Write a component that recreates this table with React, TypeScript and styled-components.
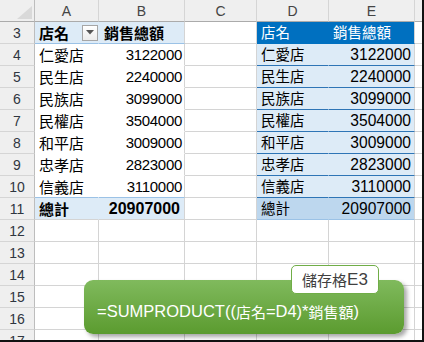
import React from 'react';
import styled, { createGlobalStyle } from 'styled-components';

const GlobalStyle = createGlobalStyle`
  html, body {
    margin: 0;
    padding: 0;
    background: #ffffff;
  }
  body {
    font-family: "Liberation Sans", "Noto Sans CJK TC", sans-serif;
  }
`;

const CJK = '"Noto Sans CJK TC", "Liberation Sans", sans-serif';
const NUM = '"Liberation Sans", "Noto Sans CJK TC", sans-serif';

const Frame = styled.div`
  position: relative;
  width: 424px;
  height: 342px;
  box-sizing: border-box;
  border-right: 2px solid #111;
  border-bottom: 2px solid #111;
  overflow: hidden;
  background: #fff;
`;

const Sheet = styled.div`
  display: grid;
  grid-template-columns: 35px 64px 86px 72px 72px 86px 1fr;
  grid-auto-rows: 22px;
`;

const Cell = styled.div<{ $align?: 'left' | 'right' | 'between' }>`
  box-sizing: border-box;
  display: flex;
  align-items: center;
  justify-content: ${(p) =>
    p.$align === 'right' ? 'flex-end' : p.$align === 'between' ? 'space-between' : 'flex-start'};
  padding: 0 3px 0 4px;
  border-right: 1px solid #d4d4d4;
  border-bottom: 1px solid #d4d4d4;
  white-space: nowrap;
  overflow: hidden;
  color: #000;
  font-size: 15px;
`;

const Corner = styled.div`
  box-sizing: border-box;
  background: #efefef;
  border-right: 1px solid #bdbdbd;
  border-bottom: 1px solid #ababab;
  display: flex;
  align-items: flex-end;
  justify-content: flex-end;
  padding: 0 2px 2px 0;
`;

const ColHead = styled.div`
  box-sizing: border-box;
  background: #efefef;
  border-right: 1px solid #d5d5d5;
  border-bottom: 1px solid #ababab;
  display: flex;
  align-items: center;
  justify-content: center;
  color: #444;
  font-family: ${NUM};
  font-size: 14px;
  overflow: hidden;
`;

const RowHead = styled.div`
  box-sizing: border-box;
  background: #efefef;
  border-right: 1px solid #bdbdbd;
  border-bottom: 1px solid #d5d5d5;
  display: flex;
  align-items: center;
  justify-content: center;
  color: #2f3640;
  font-family: ${NUM};
  font-size: 14px;
`;

type PivotTone = 'head' | 'body' | 'last' | 'total';

const PivotCell = styled(Cell)<{ $tone: PivotTone; $inner?: boolean }>`
  background: ${(p) => (p.$tone === 'head' || p.$tone === 'total' ? '#ddebf7' : '#ffffff')};
  border-right-color: ${(p) =>
    p.$inner ? (p.$tone === 'head' || p.$tone === 'total' ? '#ddebf7' : '#ffffff') : '#d4d4d4'};
  border-bottom-color: ${(p) =>
    p.$tone === 'head' || p.$tone === 'last' ? '#9bc2e6' : p.$tone === 'body' ? '#ffffff' : '#d4d4d4'};
  font-weight: ${(p) => (p.$tone === 'head' || p.$tone === 'total' ? 700 : 400)};
`;

type TableTone = 'head' | 'body' | 'total';

const TableCell = styled(Cell)<{ $tone: TableTone; $inner?: boolean }>`
  background: ${(p) => (p.$tone === 'head' ? '#0070c0' : p.$tone === 'total' ? '#bdd7ee' : '#ddebf7')};
  color: ${(p) => (p.$tone === 'head' ? '#ffffff' : '#000000')};
  border-right-color: ${(p) =>
    p.$inner ? (p.$tone === 'head' ? '#0070c0' : p.$tone === 'total' ? '#bdd7ee' : '#ddebf7') : '#d4d4d4'};
  border-bottom-color: ${(p) => (p.$tone === 'head' ? '#0070c0' : p.$tone === 'total' ? '#9bc2e6' : '#2e75b6')};
  font-size: 14px;
`;

const Han = styled.span<{ $size?: number }>`
  font-family: ${CJK};
  font-size: ${(p) => p.$size ?? 15}px;
  line-height: 1;
`;

const Num = styled.span<{ $size?: number; $bold?: boolean; $tight?: boolean }>`
  font-family: ${NUM};
  font-size: ${(p) => p.$size ?? 15}px;
  font-weight: ${(p) => (p.$bold ? 700 : 400)};
  letter-spacing: ${(p) => (p.$tight ? '-0.3px' : '0')};
  line-height: 1;
`;

const FilterButton = styled.span`
  box-sizing: border-box;
  width: 16px;
  height: 16px;
  border: 1px solid #a6a6a6;
  background: linear-gradient(#ffffff, #ececec);
  display: flex;
  align-items: center;
  justify-content: center;
  margin-right: -3px;
`;

const Callout = styled.div`
  position: absolute;
  left: 84px;
  top: 280px;
  width: 320px;
  height: 54px;
  box-sizing: border-box;
  border-radius: 9px;
  background: linear-gradient(#80ba5d, #5b9b2f);
  box-shadow: 3px 3px 4px rgba(0, 0, 0, 0.35);
  display: flex;
  align-items: center;
  padding: 9px 0 0 13px;
  color: #ffffff;
  font-family: ${NUM};
  font-size: 16.5px;
  white-space: nowrap;
`;

const Tag = styled.div`
  position: absolute;
  right: 25px;
  top: -15px;
  width: 88px;
  height: 29px;
  box-sizing: border-box;
  border: 1px solid #70ad47;
  border-radius: 5px;
  background: #ffffff;
  display: flex;
  align-items: center;
  justify-content: center;
  color: #404040;
  font-size: 17px;
`;

const stores: [string, number][] = [
  ['仁愛店', 3122000],
  ['民生店', 2240000],
  ['民族店', 3099000],
  ['民權店', 3504000],
  ['和平店', 3009000],
  ['忠孝店', 2823000],
  ['信義店', 3110000],
];

const total = stores.reduce((s, [, v]) => s + v, 0);

// F is only a sliver at the right edge, its letter falls outside the window
const columns = ['A', 'B', 'C', 'D', 'E', ''];

const Plain = () => <Cell />;

const renderRow = (r: number) => {
  if (r === 3) {
    return (
      <>
        <PivotCell $tone="head" $inner $align="between">
          <Han>店名</Han>
          <FilterButton>
            <svg width="8" height="5" viewBox="0 0 8 5">
              <polygon points="0,0 8,0 4,4.5" fill="#555" />
            </svg>
          </FilterButton>
        </PivotCell>
        <PivotCell $tone="head" style={{ paddingLeft: 5 }}>
          <Han>銷售總額</Han>
        </PivotCell>
        <Plain />
        <TableCell $tone="head" $inner>
          <Han $size={14.5}>店名</Han>
        </TableCell>
        <TableCell $tone="head">
          <Han $size={14.5}>銷售總額</Han>
        </TableCell>
        <Plain />
      </>
    );
  }
  if (r >= 4 && r <= 10) {
    const [name, value] = stores[r - 4];
    const tone: PivotTone = r === 10 ? 'last' : 'body';
    return (
      <>
        <PivotCell $tone={tone} $inner>
          <Han>{name}</Han>
        </PivotCell>
        <PivotCell $tone={tone} $align="right" style={{ paddingRight: 2 }}>
          <Num $tight>{value}</Num>
        </PivotCell>
        <Plain />
        <TableCell $tone="body" $inner>
          <Han $size={14.5}>{name}</Han>
        </TableCell>
        <TableCell $tone="body" $align="right">
          <Num $size={15.6}>{value}</Num>
        </TableCell>
        <Plain />
      </>
    );
  }
  if (r === 11) {
    return (
      <>
        <PivotCell $tone="total" $inner>
          <Han>總計</Han>
        </PivotCell>
        <PivotCell $tone="total" $align="right" style={{ paddingRight: 4 }}>
          <Num $size={16} $bold>{total}</Num>
        </PivotCell>
        <Plain />
        <TableCell $tone="total" $inner>
          <Han $size={14.5}>總計</Han>
        </TableCell>
        <TableCell $tone="total" $align="right">
          <Num $size={15.6}>{total}</Num>
        </TableCell>
        <Plain />
      </>
    );
  }
  return columns.map((c, i) => <Cell key={i} />);
};

const rows = Array.from({ length: 15 }, (_, i) => i + 3);

export default function App() {
  return (
    <>
      <GlobalStyle />
      <Frame>
        <Sheet>
          <Corner>
            <svg width="15" height="13" viewBox="0 0 15 13">
              <polygon points="15,0 15,13 0,13" fill="#d9d9d9" />
            </svg>
          </Corner>
          {columns.map((c, i) => (
            <ColHead key={i}>{c}</ColHead>
          ))}
          {rows.map((r) => (
            <React.Fragment key={r}>
              <RowHead>{r}</RowHead>
              {renderRow(r)}
            </React.Fragment>
          ))}
        </Sheet>
        <Callout>
          <Tag>
            <Han $size={15}>儲存格</Han>
            <span>E3</span>
          </Tag>
          <span>=SUMPRODUCT((</span>
          <Han $size={15}>店名</Han>
          <span>=D4)*</span>
          <Han $size={15}>銷售額</Han>
          <span>)</span>
        </Callout>
      </Frame>
    </>
  );
}
